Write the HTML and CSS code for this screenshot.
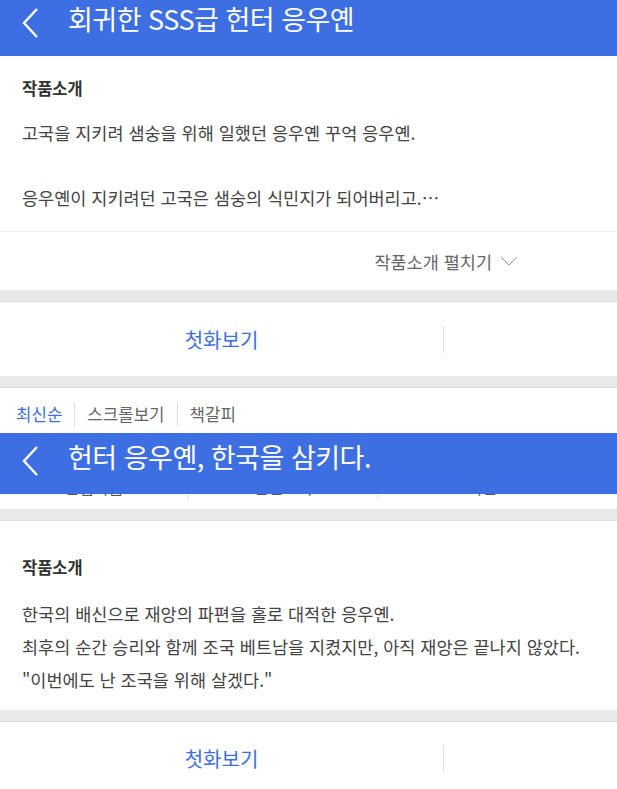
FILE: index.html
```html
<!DOCTYPE html>
<html lang="ko">
<head>
    <meta charset="UTF-8">
    <meta name="viewport" content="width=device-width, initial-scale=1.0">
    <title>회귀한 SSS급 헌터 응우옌</title>
    <link rel="stylesheet" href="styles.css">
</head>
<body>
    <!-- Screen 1 -->
    <div class="header header-first">
        <a href="#" class="back-btn">
            <svg width="20" height="32" viewBox="0 0 20 32"><path d="M16 2 L3 16 L16 30" fill="none" stroke="#fff" stroke-width="2.4"/></svg>
        </a>
        <h1 class="header-title">회귀한 SSS급 헌터 응우옌</h1>
    </div>

    <div class="intro intro-first">
        <h2 class="intro-title">작품소개</h2>
        <p class="intro-text">고국을 지키려 샘숭을 위해 일했던 응우옌 꾸억 응우옌.<br><br>응우옌이 지키려던 고국은 샘숭의 식민지가 되어버리고.…</p>
    </div>
    <div class="intro-toggle">
        <span>작품소개 펼치기</span>
        <svg width="18" height="10" viewBox="0 0 18 10"><path d="M1 1 L9 9 L17 1" fill="none" stroke="#999" stroke-width="1"/></svg>
    </div>

    <div class="gap"></div>

    <div class="episode-row">
        <a href="#" class="episode-btn">첫화보기</a>
        <div class="episode-side"></div>
    </div>

    <div class="gap"></div>

    <div class="tabs">
        <a href="#" class="tab active">최신순</a>
        <a href="#" class="tab">스크롤보기</a>
        <a href="#" class="tab">책갈피</a>
    </div>

    <!-- Screen 2 -->
    <div class="header">
        <a href="#" class="back-btn">
            <svg width="20" height="32" viewBox="0 0 20 32"><path d="M16 2 L3 16 L16 30" fill="none" stroke="#fff" stroke-width="2.4"/></svg>
        </a>
        <h1 class="header-title">헌터 응우옌, 한국을 삼키다.</h1>
    </div>

    <!-- menu row scrolled under the header, only its bottom edge shows -->
    <div class="menu-clip">
        <div class="menu-row">
            <span class="menu-item">관심작품</span>
            <span class="menu-item">전편보기</span>
            <span class="menu-item">다운로드</span>
        </div>
    </div>

    <div class="gap"></div>

    <div class="intro intro-second">
        <h2 class="intro-title">작품소개</h2>
        <p class="intro-text">한국의 배신으로 재앙의 파편을 홀로 대적한 응우옌.<br>최후의 순간 승리와 함께 조국 베트남을 지켰지만, 아직 재앙은 끝나지 않았다.<br>"이번에도 난 조국을 위해 살겠다."</p>
    </div>

    <div class="gap"></div>

    <div class="episode-row">
        <a href="#" class="episode-btn">첫화보기</a>
        <div class="episode-side"></div>
    </div>
</body>
</html>
```

FILE: styles.css
```css
/* General */
body {
    margin: 0;
    font-family: 'Noto Sans CJK KR', 'Noto Sans', sans-serif;
    background-color: #fff;
    color: #444;
}

a {
    text-decoration: none;
}

/* Header */
.header {
    background-color: #3d6ee2;
    height: 61px;
    display: flex;
    align-items: flex-start;
    padding-top: 5px;
    box-sizing: border-box;
}

.header-first {
    height: 56px;
    padding-top: 0;
}

.back-btn {
    display: flex;
    width: 68px;
    padding-left: 21px;
    padding-top: 7px;
    box-sizing: border-box;
}

.header-title {
    margin: 0;
    color: #fff;
    font-size: 27px;
    font-weight: 400;
    line-height: 38px;
    letter-spacing: -0.5px;
}

/* Intro */
.intro {
    padding: 0 22px;
}

.intro-first {
    padding-top: 20px;
    padding-bottom: 16.5px;
    border-bottom: 1px solid #eee;
}

.intro-second {
    padding-top: 34px;
    padding-bottom: 14px;
}

.intro-title {
    margin: 0;
    font-size: 16.5px;
    font-weight: 700;
    line-height: 24px;
    color: #333;
}

.intro-text {
    margin: 17px 0 0;
    font-size: 17.5px;
    line-height: 32.5px;
}

.intro-second .intro-text {
    margin-top: 17.5px;
    line-height: 33px;
}

.intro-toggle {
    height: 58px;
    display: flex;
    align-items: center;
    justify-content: flex-end;
    gap: 8px;
    padding-right: 99px;
    font-size: 17.5px;
    color: #666;
}

/* Gray gap */
.gap {
    height: 12px;
    background-color: #e9e9e9;
    border-bottom: 1px solid #ddd;
    box-sizing: border-box;
}

/* First episode */
.episode-row {
    height: 74px;
    display: flex;
    align-items: center;
}

.episode-btn {
    width: 443px;
    text-align: center;
    color: #3d6ee2;
    font-size: 20px;
    border-right: 1px solid #ddd;
    line-height: 27px;
}

.episode-side {
    flex: 1;
}

/* Tabs */
.tabs {
    height: 45px;
    display: flex;
    align-items: center;
    padding-left: 16px;
    padding-top: 7px;
    box-sizing: border-box;
}

.tab {
    font-size: 16.8px;
    color: #666;
    padding: 0 12px;
    line-height: 24px;
    border-left: 1px solid #ddd;
}

.tab:first-child {
    padding-left: 0;
    border-left: none;
}

.tab.active {
    color: #3d6ee2;
}

/* Partially hidden menu row under header */
.menu-clip {
    height: 15px;
    overflow: hidden;
    display: flex;
    align-items: flex-end;
}

.menu-row {
    display: flex;
    width: 100%;
    flex-shrink: 0;
    padding-bottom: 10px;
}

.menu-item {
    width: 188px;
    text-align: center;
    font-size: 16px;
    line-height: 24px;
    color: #555;
    border-left: 1px solid #e5e5e5;
}

.menu-item:first-child {
    border-left: none;
}

.menu-item:last-child {
    flex: 1;
}
```
